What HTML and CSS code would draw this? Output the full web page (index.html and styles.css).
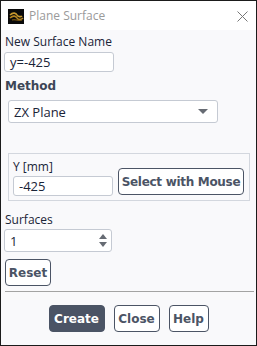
FILE: index.html
```html
<!DOCTYPE html>
<html>
<head>
<meta charset="utf-8">
<link rel="stylesheet" href="styles.css">
</head>
<body>
<div class="window">
  <div class="titlebar">
    <svg class="appicon" width="16" height="15" viewBox="0 0 16 15">
      <rect width="16" height="15" fill="#0a0a0a"/>
      <path d="M2 6 C5 3,8 4,9 6 C10 8,13 8,14 7" stroke="#c99a2e" stroke-width="1.6" fill="none"/>
      <path d="M2 9 C5 6,8 7,9 9 C10 11,13 11,15 9" stroke="#b5851f" stroke-width="1.6" fill="none"/>
      <path d="M4 11 C7 10,10 12,14 11" stroke="#8a6314" stroke-width="1.2" fill="none"/>
    </svg>
    <span class="title">Plane Surface</span>
    <svg class="close" width="11" height="11" viewBox="0 0 11 11">
      <path d="M0.5 0.5 L10.5 10.5 M10.5 0.5 L0.5 10.5" stroke="#777" stroke-width="1" fill="none"/>
    </svg>
  </div>
  <div class="content">
    <div class="label first">New Surface Name</div>
    <div class="input name">y=-425</div>
    <div class="label bold method">Method</div>
    <div class="select"><span>ZX Plane</span><span class="caret"></span></div>
    <div class="group">
      <div class="col">
        <div class="label ylabel">Y [mm]</div>
        <div class="input yinput">-425</div>
      </div>
      <div class="btn mouse">Select with Mouse</div>
    </div>
    <div class="label surfaces">Surfaces</div>
    <div class="input spinner"><span>1</span>
      <span class="arrows"><span class="up"></span><span class="down"></span></span>
    </div>
    <div class="btn reset">Reset</div>
    <div class="sep"></div>
    <div class="actions">
      <div class="btn primary create">Create</div>
      <div class="btn closebtn">Close</div>
      <div class="btn help">Help</div>
    </div>
  </div>
</div>
</body>
</html>
```
FILE: styles.css
```css
html, body {
  margin: 0;
  padding: 0;
  background: #fff;
}
.window {
  width: 257px;
  height: 346px;
  box-sizing: border-box;
  border: 1px solid #1b1b1b;
  background: #f9f9fb;
  font-family: "Open Sans", "Liberation Sans", sans-serif;
  font-size: 12px;
  color: #1a2438;
  display: flex;
  flex-direction: column;
}
.titlebar {
  height: 29px;
  background: #fff;
  display: flex;
  align-items: center;
  flex-shrink: 0;
}
.appicon {
  margin-left: 7px;
  margin-top: 1px;
}
.title {
  margin-left: 5px;
  color: #9a9a9a;
  font-size: 12px;
}
.close {
  margin-left: auto;
  margin-right: 8px;
  margin-top: 1px;
}
.content {
  padding: 0 3px;
  display: flex;
  flex-direction: column;
  align-items: flex-start;
}
.label {
  line-height: 16px;
  height: 16px;
  white-space: nowrap;
}
.first { margin-top: 4px; margin-left: 1px; }
.bold {
  font-family: "DejaVu Sans", sans-serif;
  font-weight: bold;
  font-size: 12px;
  color: #3d4657;
}
.input {
  box-sizing: border-box;
  border: 1px solid #c5cad3;
  border-radius: 3px;
  background: #fff;
  display: flex;
  align-items: center;
  padding-left: 5px;
  line-height: 16px;
}
.name {
  margin-top: 2px;
  width: 110px;
  height: 20px;
  font-size: 13px;
}
.method { margin-top: 6px; margin-left: 1px; }
.select {
  margin-top: 6px;
  margin-left: 4px;
  box-sizing: border-box;
  width: 210px;
  height: 23px;
  border: 1px solid #c5cad3;
  border-radius: 3px;
  background: #fff;
  display: flex;
  align-items: center;
  padding: 0 9px 0 5px;
  font-size: 13px;
}
.caret {
  margin-left: auto;
  width: 0;
  height: 0;
  border-left: 5px solid transparent;
  border-right: 5px solid transparent;
  border-top: 5px solid #666b73;
}
.group {
  margin-top: 30px;
  margin-left: 4px;
  box-sizing: border-box;
  width: 242px;
  height: 48px;
  border: 1px solid #d3d7de;
  display: flex;
  align-items: flex-end;
  padding: 0 5px 4px 4px;
}
.col {
  display: flex;
  flex-direction: column;
}
.ylabel { margin-bottom: 1px; }
.yinput {
  width: 100px;
  height: 20px;
  font-size: 13px;
}
.btn {
  box-sizing: border-box;
  border: 1px solid #4b5465;
  border-radius: 4px;
  background: #fff;
  font-family: "DejaVu Sans", sans-serif;
  font-weight: bold;
  font-size: 12px;
  color: #4b5465;
  display: flex;
  align-items: center;
  justify-content: center;
  height: 27px;
  white-space: nowrap;
}
.mouse {
  margin-left: 5px;
  width: 126px;
  margin-bottom: 1px;
  letter-spacing: -0.3px;
}
.surfaces { margin-top: 11px; margin-left: 1px; }
.spinner {
  margin-top: 1px;
  width: 108px;
  height: 23px;
  padding-right: 4px;
  font-size: 13px;
}
.arrows {
  margin-left: auto;
  display: flex;
  flex-direction: column;
  gap: 3px;
}
.up, .down {
  width: 0;
  height: 0;
  border-left: 4px solid transparent;
  border-right: 4px solid transparent;
}
.up { border-bottom: 5px solid #666b73; }
.down { border-top: 5px solid #666b73; }
.reset {
  margin-top: 7px;
  margin-left: 1px;
  width: 46px;
  height: 27px;
}
.sep {
  margin-top: 5px;
  margin-left: 1px;
  width: 249px;
  height: 1px;
  background: #a3a3a3;
}
.actions {
  align-self: stretch;
  margin-top: 13px;
  display: flex;
  justify-content: center;
  gap: 9px;
}
.actions .btn { height: 27px; }
.create { width: 56px; }
.primary {
  background: #4b5465;
  color: #fff;
}
.closebtn { width: 46px; }
.help { width: 40px; }
```
